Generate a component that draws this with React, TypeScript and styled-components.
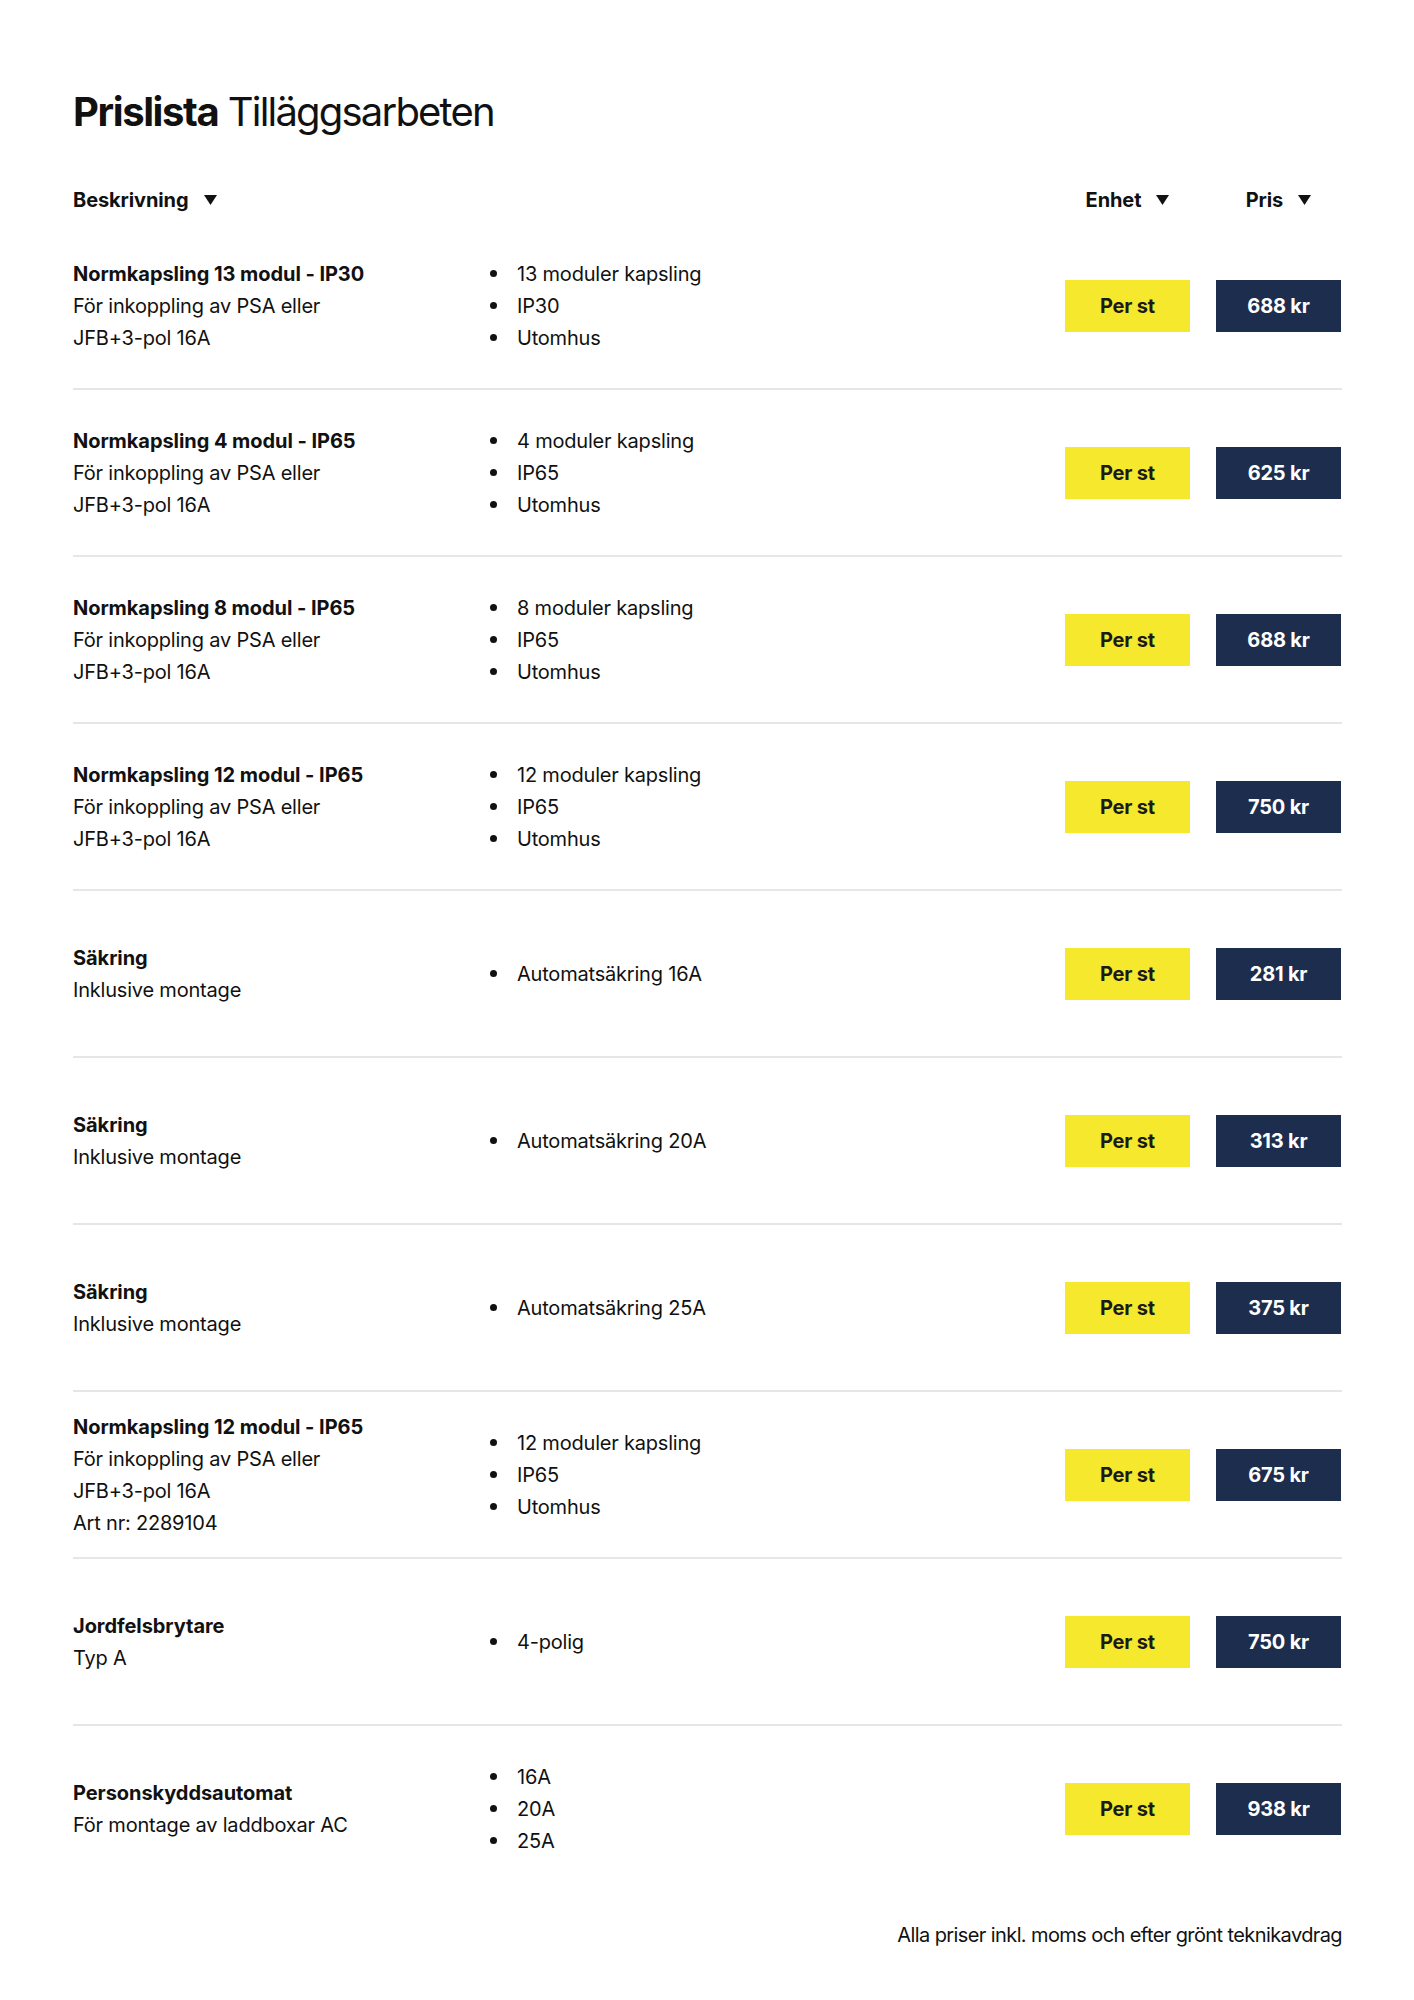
import { FC } from "react";
import styled, { createGlobalStyle } from "styled-components";

type PriceRow = {
  title: string;
  lines: string[];
  features: string[];
  unit: string;
  price: string;
};

const kapsling = ["För inkoppling av PSA eller", "JFB+3-pol 16A"];

const rows: PriceRow[] = [
  {
    title: "Normkapsling 13 modul - IP30",
    lines: kapsling,
    features: ["13 moduler kapsling", "IP30", "Utomhus"],
    unit: "Per st",
    price: "688 kr",
  },
  {
    title: "Normkapsling 4 modul - IP65",
    lines: kapsling,
    features: ["4 moduler kapsling", "IP65", "Utomhus"],
    unit: "Per st",
    price: "625 kr",
  },
  {
    title: "Normkapsling 8 modul - IP65",
    lines: kapsling,
    features: ["8 moduler kapsling", "IP65", "Utomhus"],
    unit: "Per st",
    price: "688 kr",
  },
  {
    title: "Normkapsling 12 modul - IP65",
    lines: kapsling,
    features: ["12 moduler kapsling", "IP65", "Utomhus"],
    unit: "Per st",
    price: "750 kr",
  },
  {
    title: "Säkring",
    lines: ["Inklusive montage"],
    features: ["Automatsäkring 16A"],
    unit: "Per st",
    price: "281 kr",
  },
  {
    title: "Säkring",
    lines: ["Inklusive montage"],
    features: ["Automatsäkring 20A"],
    unit: "Per st",
    price: "313 kr",
  },
  {
    title: "Säkring",
    lines: ["Inklusive montage"],
    features: ["Automatsäkring 25A"],
    unit: "Per st",
    price: "375 kr",
  },
  {
    title: "Normkapsling 12 modul - IP65",
    lines: [...kapsling, "Art nr: 2289104"],
    features: ["12 moduler kapsling", "IP65", "Utomhus"],
    unit: "Per st",
    price: "675 kr",
  },
  {
    title: "Jordfelsbrytare",
    lines: ["Typ A"],
    features: ["4-polig"],
    unit: "Per st",
    price: "750 kr",
  },
  {
    title: "Personskyddsautomat",
    lines: ["För montage av laddboxar AC"],
    features: ["16A", "20A", "25A"],
    unit: "Per st",
    price: "938 kr",
  },
];

const SortArrow: FC = () => (
  <svg width="13" height="10" viewBox="0 0 13 10" aria-hidden>
    <path d="M0 0h13L6.5 10z" fill="#111" />
  </svg>
);

const App: FC = () => (
  <>
    <GlobalStyle />
    <Page>
      <Title>
        <strong>Prislista</strong> Tilläggsarbeten
      </Title>

      <HeaderRow>
        <HeaderCell>
          Beskrivning <SortArrow />
        </HeaderCell>
        <span />
        <HeaderCell $center>
          Enhet <SortArrow />
        </HeaderCell>
        <HeaderCell $center>
          Pris <SortArrow />
        </HeaderCell>
      </HeaderRow>

      {rows.map((row, i) => (
        <Row key={i} $last={i === rows.length - 1}>
          <Description>
            <ItemTitle>{row.title}</ItemTitle>
            {row.lines.map((line) => (
              <Line key={line}>{line}</Line>
            ))}
          </Description>
          <Features>
            {row.features.map((f) => (
              <Feature key={f}>{f}</Feature>
            ))}
          </Features>
          <Tag $variant="unit">{row.unit}</Tag>
          <Tag $variant="price">{row.price}</Tag>
        </Row>
      ))}

      <Footer>Alla priser inkl. moms och efter grönt teknikavdrag</Footer>
    </Page>
  </>
);

export default App;

const GlobalStyle = createGlobalStyle`
  body {
    margin: 0;
    background: #fff;
    color: #111;
    font-family: Inter, "Noto Sans", sans-serif;
  }
`;

const Page = styled.main`
  width: 1414px;
  box-sizing: border-box;
  padding: 88px 72px 60px 73px;
`;

const Title = styled.h1`
  margin: 0;
  font-size: 40px;
  line-height: 48px;
  font-weight: 400;
  letter-spacing: -0.045em;

  strong {
    font-weight: 700;
    letter-spacing: -0.035em;
  }
`;

// last column a touch wider than the tag so the price box stops short of the divider
const grid = `
  display: grid;
  grid-template-columns: 391px 1fr 125px 126px;
  column-gap: 26px;
  align-items: center;
`;

const HeaderRow = styled.div`
  ${grid}
  margin-top: 41px;
  height: 46px;
`;

const HeaderCell = styled.div<{ $center?: boolean }>`
  display: flex;
  align-items: center;
  justify-content: ${({ $center }) => ($center ? "center" : "flex-start")};
  width: ${({ $center }) => ($center ? "125px" : "auto")};
  gap: 15px;
  font-size: 20px;
  font-weight: 700;
  letter-spacing: -0.005em;
`;

const Row = styled.div<{ $last?: boolean }>`
  ${grid}
  height: 167px;
  box-sizing: border-box;
  border-bottom: 2px solid ${({ $last }) => ($last ? "transparent" : "#e6e6e6")};
`;

const Description = styled.div`
  font-size: 20px;
  line-height: 32px;
`;

const ItemTitle = styled.div`
  font-weight: 700;
  letter-spacing: -0.003em;
`;

const Line = styled.div`
  font-weight: 400;
  letter-spacing: -0.01em;
`;

const Features = styled.ul`
  margin: 0;
  padding: 0;
  list-style: none;
  font-size: 20px;
  line-height: 32px;
  letter-spacing: -0.01em;
`;

const Feature = styled.li`
  display: flex;
  align-items: center;
  gap: 20px;

  &::before {
    content: "";
    width: 7px;
    height: 7px;
    border-radius: 50%;
    background: #111;
    flex: none;
  }
`;

const Tag = styled.div<{ $variant: "unit" | "price" }>`
  width: 125px;
  height: 52px;
  display: flex;
  align-items: center;
  justify-content: center;
  font-size: 20px;
  font-weight: 700;
  letter-spacing: -0.01em;
  background: ${({ $variant }) => ($variant === "unit" ? "#f6e82c" : "#1d2d4d")};
  color: ${({ $variant }) => ($variant === "unit" ? "#1a1a1a" : "#fff")};
`;

const Footer = styled.p`
  margin: 26px 0 0;
  text-align: right;
  font-size: 20px;
  line-height: 32px;
  letter-spacing: -0.03em;
`;
